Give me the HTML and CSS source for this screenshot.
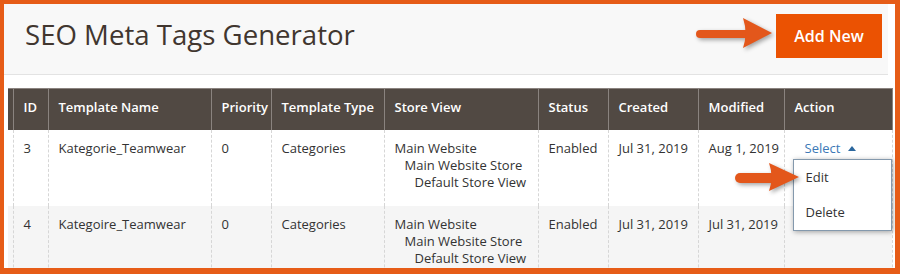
FILE: index.html
```html
<!DOCTYPE html>
<html>
<head>
<meta charset="utf-8">
<link rel="stylesheet" href="styles.css">
</head>
<body>
<div class="frame">
  <div class="page-header">
    <h1 class="page-title">SEO Meta Tags Generator</h1>
    <button class="btn-primary">Add New</button>
  </div>

  <table class="grid">
    <colgroup>
      <col class="c-edge"><col class="c-id"><col class="c-name"><col class="c-pri"><col class="c-type"><col class="c-store"><col class="c-status"><col class="c-created"><col class="c-mod"><col class="c-action">
    </colgroup>
    <thead>
      <tr>
        <th class="edge"></th>
        <th>ID</th>
        <th>Template Name</th>
        <th>Priority</th>
        <th>Template Type</th>
        <th>Store View</th>
        <th>Status</th>
        <th>Created</th>
        <th>Modified</th>
        <th>Action</th>
      </tr>
    </thead>
    <tbody>
      <tr class="row-odd">
        <td class="edge"></td>
        <td>3</td>
        <td>Kategorie_Teamwear</td>
        <td>0</td>
        <td>Categories</td>
        <td><div>Main Website</div><div class="lvl1">Main Website Store</div><div class="lvl2">Default Store View</div></td>
        <td>Enabled</td>
        <td>Jul 31, 2019</td>
        <td>Aug 1, 2019</td>
        <td class="action">
          <div class="action-wrap">
            <span class="select">Select<span class="caret"></span></span>
            <ul class="menu">
              <li>Edit</li>
              <li>Delete</li>
            </ul>
          </div>
        </td>
      </tr>
      <tr class="row-even">
        <td class="edge"></td>
        <td>4</td>
        <td>Kategoire_Teamwear</td>
        <td>0</td>
        <td>Categories</td>
        <td><div>Main Website</div><div class="lvl1">Main Website Store</div><div class="lvl2">Default Store View</div></td>
        <td>Enabled</td>
        <td>Jul 31, 2019</td>
        <td>Jul 31, 2019</td>
        <td class="action"></td>
      </tr>
    </tbody>
  </table>

  <svg class="arrow arrow-add" width="84" height="40" viewBox="0 0 84 40">
    <path d="M7 14 L53 14 L53 22 L7 22 A4 4 0 0 1 7 14 Z" />
    <path d="M50 2 Q55 17 50 32 L79 17 Z" />
  </svg>
  <svg class="arrow arrow-edit" width="72" height="34" viewBox="0 0 72 34">
    <path d="M7 11 L40 11 L40 21 L7 21 A5 5 0 0 1 7 11 Z" />
    <path d="M36 1 Q41 15 36 29 L66 15 Z" />
  </svg>
</div>
</body>
</html>
```

FILE: styles.css
```css
* { box-sizing: border-box; }

html, body {
  margin: 0;
  padding: 0;
  background: #ffffff;
}

.frame {
  position: relative;
  width: 900px;
  height: 274px;
  overflow: hidden;
  background: #ffffff;
  border-style: solid;
  border-color: #e65c17;
  border-width: 4px 5px 6px 4px;
  font-family: "Open Sans", "Noto Sans", sans-serif;
  color: #333333;
}

.page-header {
  display: flex;
  justify-content: space-between;
  align-items: flex-start;
  width: 884px;
  height: 71px;
  padding: 10px 6px 0 21px;
  background: #f8f8f8;
  border-bottom: 1px solid #e3e3e3;
}

.page-title {
  margin: 1px 0 0 0;
  font-size: 27.6px;
  line-height: 38px;
  font-weight: 400;
  color: #41362f;
}

.btn-primary {
  width: 106px;
  height: 44px;
  border: none;
  background: #eb5202;
  color: #ffffff;
  font-family: "Open Sans", "Noto Sans", sans-serif;
  font-size: 16px;
  font-weight: 600;
  padding: 0;
}

.grid {
  margin: 13px 0 0 4px;
  width: 884px;
  border-collapse: collapse;
  table-layout: fixed;
  font-size: 13px;
  line-height: 17px;
}

.c-edge { width: 5px; }
.c-id { width: 35px; }
.c-name { width: 163px; }
.c-pri { width: 60px; }
.c-type { width: 113px; }
.c-store { width: 154px; }
.c-status { width: 70px; }
.c-created { width: 90px; }
.c-mod { width: 86px; }
.c-action { width: 108px; }

.grid th {
  height: 41px;
  background: #514943;
  color: #ffffff;
  font-weight: 600;
  font-size: 13px;
  text-align: left;
  padding: 0 0 3px 10px;
  border-top: 1px solid #8a837f;
  border-left: 1px solid #8a837f;
  border-right: 1px solid #8a837f;
  white-space: nowrap;
}

.grid th.edge {
  border-left: none;
  padding: 0;
}

.grid td {
  vertical-align: top;
  padding: 10px 0 15px 10px;
  border-left: 1px dashed #d6d6d6;
  border-right: 1px dashed #d6d6d6;
  color: #333333;
  white-space: nowrap;
}

.grid td.edge {
  border-left: none;
  padding: 0;
}

.row-odd td { background: #ffffff; height: 76px; }
.row-even td { background: #f5f5f5; }

.lvl1 { padding-left: 10px; }
.lvl2 { padding-left: 20px; }

.action-wrap {
  position: relative;
}

.select {
  display: inline-flex;
  align-items: center;
  padding-left: 10px;
  color: #3b78b6;
}

.caret {
  display: inline-block;
  margin-left: 8px;
  width: 0;
  height: 0;
  border-left: 4px solid transparent;
  border-right: 4px solid transparent;
  border-bottom: 5px solid #2b679e;
}

.menu {
  position: absolute;
  left: -2px;
  top: 19px;
  width: 99px;
  margin: 0;
  padding: 0;
  list-style: none;
  background: #ffffff;
  border: 1px solid #8499ad;
  box-shadow: 1px 1px 5px rgba(0, 0, 0, 0.35);
  z-index: 2;
}

.menu li {
  height: 35px;
  line-height: 35px;
  padding-left: 12px;
  color: #333333;
}

.arrow {
  position: absolute;
  fill: #e3571b;
  filter: drop-shadow(2px 2px 2px rgba(0, 0, 0, 0.35));
  z-index: 3;
}

.arrow-add {
  left: 689px;
  top: 12px;
}

.arrow-edit {
  left: 729px;
  top: 158px;
}
```
